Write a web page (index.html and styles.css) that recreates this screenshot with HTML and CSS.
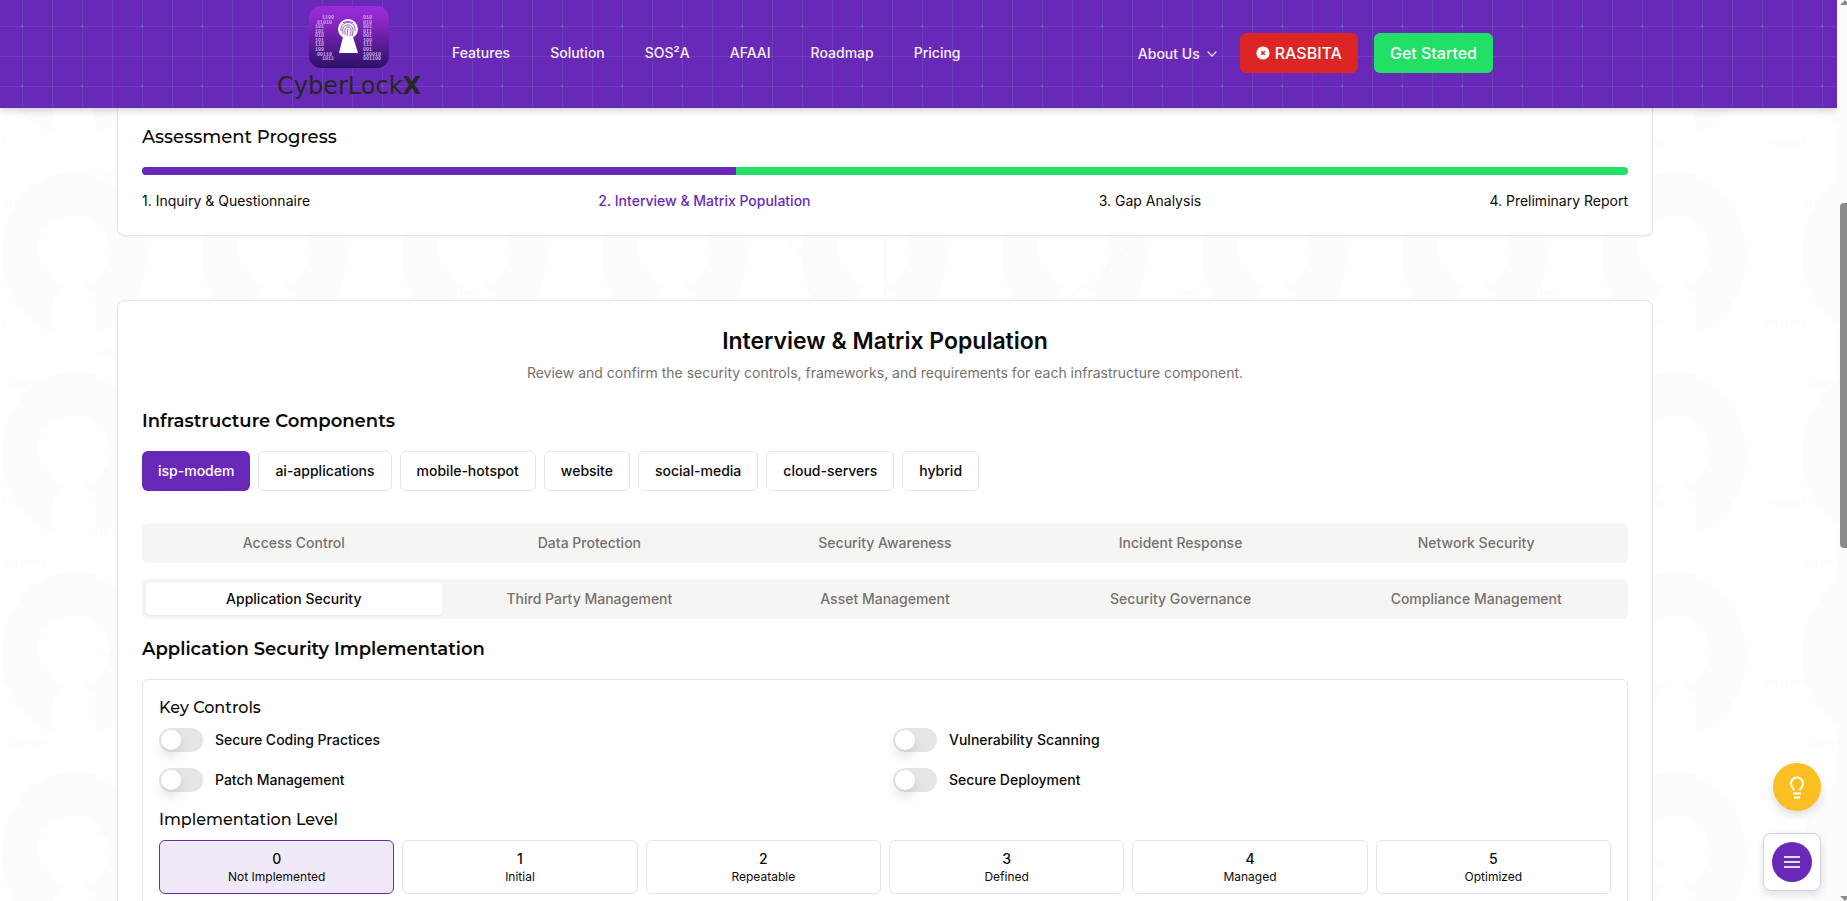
FILE: index.html
```html
<!DOCTYPE html>
<html lang="en">
<head>
<meta charset="utf-8">
<title>CyberLockX – Interview &amp; Matrix Population</title>
<link rel="stylesheet" href="styles.css">
</head>
<body>
<div class="viewport">
  <svg class="backdrop" aria-hidden="true">
    <defs>
      <pattern id="keyholes" width="200" height="200" patternUnits="userSpaceOnUse" x="-26" y="-28">
        <ellipse cx="100" cy="83" rx="73" ry="83" fill="#fcfcfe"/>
        <circle cx="100" cy="79" r="36" fill="#fff"/>
        <path d="M79 200V133a21 21 0 0 1 42 0V200z" fill="#fff"/>
      </pattern>
      <pattern id="bits" width="360" height="180" patternUnits="userSpaceOnUse" x="-37" y="130">
        <g class="bits">
          <text x="0" y="16">10101011</text><text x="40" y="76">11100101</text>
          <text x="130" y="46">0101100</text><text x="220" y="16">01011010</text><text x="130" y="166">1100</text>
        </g>
      </pattern>
    </defs>
    <rect width="100%" height="100%" fill="url(#keyholes)"/>
    <rect width="100%" height="100%" fill="url(#bits)"/>
    <path d="M783 236L847 300M885 236V300M1143 236L1067 300" stroke="#f8f8fb" fill="none"/>
  </svg>

  <header class="header">
    <div class="header-inner">
      <a class="brand" href="#">
        <svg class="brand-mark" viewBox="0 0 80 62" aria-hidden="true">
          <defs><linearGradient id="tile" x1="0" y1="0" x2="0" y2="1">
            <stop offset="0" stop-color="#9b2ad8"/><stop offset=".2" stop-color="#8f28cb"/><stop offset="1" stop-color="#2c1166"/>
          </linearGradient></defs>
          <rect width="80" height="62" rx="12" fill="url(#tile)"/>
          <g class="mark-bits">
            <text x="13" y="13">1100</text><text x="8" y="18">01010</text><text x="6" y="22">101</text><text x="6" y="27">101</text><text x="6" y="31">010</text><text x="6" y="36">101</text><text x="6" y="40">110</text><text x="6" y="45">100</text><text x="8" y="50">00110</text><text x="13" y="54">1011</text>
            <text x="54" y="13">010</text><text x="54" y="18">010</text><text x="54" y="22">001</text><text x="54" y="27">011</text><text x="54" y="31">001</text><text x="54" y="36">100</text><text x="54" y="40">111</text><text x="54" y="45">001</text><text x="54" y="50">100010</text><text x="54" y="54">001100</text>
          </g>
          <path d="M34 31h10l5 16H30z" fill="#fff"/>
          <circle cx="39" cy="23" r="10" fill="#fff"/>
          <g fill="none" stroke="#7a2bb0" stroke-width=".8">
            <path d="M32 25a7 7 0 0 1 14-3v3M34 28c-1-7 1-9 5-9s5 3 5 7l-1 4M36 29c0-3-1-8 3-8s3 5 2 9M38 30c1-3 0-5 1-7"/>
            <path d="M34 17c3-2 7-2 10 0"/>
          </g>
        </svg>
        <span class="brand-name">CyberLock<b>X</b></span>
      </a>
      <nav class="nav">
        <a href="#">Features</a><a href="#">Solution</a><a href="#">SOS²A</a><a href="#">AFAAI</a><a href="#">Roadmap</a><a href="#">Pricing</a>
      </nav>
      <div class="actions">
        <button class="about" type="button">About Us
          <svg width="12" height="12" viewBox="0 0 12 12" fill="none" stroke="currentColor" stroke-width="1.2" stroke-linecap="round" stroke-linejoin="round" aria-hidden="true"><path d="M2 4l4 4 4-4"/></svg>
        </button>
        <button class="btn btn-red" type="button">
          <svg width="14" height="14" viewBox="0 0 14 14" aria-hidden="true"><circle cx="7" cy="7" r="6.6" fill="#fff"/><path d="M5.200 5.200l3.600 3.600M8.800 5.200L5.200 8.800" stroke="#dc2626" stroke-width="1.600"/></svg>
          RASBITA</button>
        <button class="btn btn-green" type="button">Get Started</button>
      </div>
    </div>
  </header>

  <main class="main">
    <section class="card progress-card">
      <h2 class="title-light">Assessment Progress</h2>
      <div class="bar" role="progressbar" aria-label="Assessment Progress" aria-valuenow="40" aria-valuemin="0" aria-valuemax="100"><div class="bar-fill" style="width:40%"></div></div>
      <div class="steps"><span>1. Inquiry &amp; Questionnaire</span><span class="current">2. Interview &amp; Matrix Population</span><span>3. Gap Analysis</span><span>4. Preliminary Report</span></div>
    </section>

    <section class="card matrix-card">
      <div class="intro">
        <h1>Interview &amp; Matrix Population</h1>
        <p>Review and confirm the security controls, frameworks, and requirements for each infrastructure component.</p>
      </div>
      <h2 class="title">Infrastructure Components</h2>
      <div class="chips">
        <button class="chip selected" type="button">isp-modem</button><button class="chip" type="button">ai-applications</button><button class="chip" type="button">mobile-hotspot</button><button class="chip" type="button">website</button><button class="chip" type="button">social-media</button><button class="chip" type="button">cloud-servers</button><button class="chip" type="button">hybrid</button>
      </div>
      <div class="tabs" role="tablist">
        <button class="tab" role="tab">Access Control</button><button class="tab" role="tab">Data Protection</button><button class="tab" role="tab">Security Awareness</button><button class="tab" role="tab">Incident Response</button><button class="tab" role="tab">Network Security</button>
      </div>
      <div class="tabs" role="tablist">
        <button class="tab active" role="tab" aria-selected="true">Application Security</button><button class="tab" role="tab">Third Party Management</button><button class="tab" role="tab">Asset Management</button><button class="tab" role="tab">Security Governance</button><button class="tab" role="tab">Compliance Management</button>
      </div>
      <h2 class="title">Application Security Implementation</h2>
      <div class="panel">
        <h3>Key Controls</h3>
        <div class="controls">
          <label class="control"><input class="switch" type="checkbox" role="switch">Secure Coding Practices</label>
          <label class="control"><input class="switch" type="checkbox" role="switch">Vulnerability Scanning</label>
          <label class="control"><input class="switch" type="checkbox" role="switch">Patch Management</label>
          <label class="control"><input class="switch" type="checkbox" role="switch">Secure Deployment</label>
        </div>
        <h3>Implementation Level</h3>
        <div class="levels">
          <button class="level chosen" type="button"><b>0</b><span>Not Implemented</span></button>
          <button class="level" type="button"><b>1</b><span>Initial</span></button>
          <button class="level" type="button"><b>2</b><span>Repeatable</span></button>
          <button class="level" type="button"><b>3</b><span>Defined</span></button>
          <button class="level" type="button"><b>4</b><span>Managed</span></button>
          <button class="level" type="button"><b>5</b><span>Optimized</span></button>
        </div>
      </div>
    </section>
  </main>

  <div class="floating">
    <button class="tip" type="button" aria-label="Tips">
      <svg width="24" height="24" viewBox="0 0 24 24" fill="none" stroke="#fff" stroke-width="2" aria-hidden="true"><path d="M9 15.500c0-2-3-3.200-3-7a6 6 0 0 1 12 0c0 3.800-3 5-3 7M8 18.500h8M9 22.500h6"/></svg>
    </button>
    <div class="menu-box">
      <button class="menu" type="button" aria-label="Menu">
        <svg width="16" height="14" viewBox="0 0 16 14" stroke="#e6daf5" stroke-width="2" aria-hidden="true"><path d="M0 2h16M0 7h16M0 12h16"/></svg>
      </button>
    </div>
  </div>
</div>
<div class="scroll" aria-hidden="true"><div class="thumb"></div><i class="arrow up"></i><i class="arrow down"></i></div>
</body>
</html>
```
FILE: styles.css
```css
:root { --purple: #6929b8; --green: #21e065; --line: #e5e5e5; --ink: #0c0a09; --muted: #78716c; }
* { box-sizing: border-box; }
body { margin: 0; height: 100vh; display: flex; overflow: hidden; background: #fff; color: var(--ink); font: 14px/20px Inter, "Liberation Sans", sans-serif; }
button { font: inherit; color: inherit; border: 0; background: none; padding: 0; }
a { color: inherit; text-decoration: none; }
h1, h2, h3, p { margin: 0; }
.viewport { position: relative; flex: 1; overflow: hidden; }
.backdrop { position: absolute; inset: 0; width: 100%; height: 100%; }
.bits { font: 9px "Liberation Mono", monospace; fill: #fafafb; }

.header { position: relative; z-index: 2; height: 108px; padding-right: 67px; background-color: var(--purple); color: #f5effb; box-shadow: 0 2px 8px rgba(0,0,0,.2);
  background-image: radial-gradient(circle at 1px 1px, rgba(160,130,230,.3) 1px, transparent 1px), linear-gradient(rgba(125,135,190,.2) 1px, transparent 1px), linear-gradient(90deg, rgba(125,135,190,.2) 1px, transparent 1px);
  background-size: 60px 60px, 30px 30px, 30px 30px; background-position: 21px 25px, 0 26px, 22px 0; }
.header-inner { max-width: 1280px; height: 100%; margin: 0 auto; padding: 0 32px 3px; display: flex; align-items: center; }
.brand { width: 144px; display: flex; flex-direction: column; align-items: center; gap: 4px; color: #262626; }
.brand-mark { width: 80px; height: 62px; }
.mark-bits { font: bold 5px "Liberation Mono", monospace; fill: #c9a5e3; }
.brand-name { font: 24px/28px "DejaVu Sans", sans-serif; }
.nav { display: flex; gap: 40px; margin-left: 31px; font-weight: 500; }
.actions { display: flex; align-items: center; gap: 16px; margin-left: auto; }
.about { display: flex; align-items: center; gap: 6px; font-weight: 500; margin-right: 6px; padding-top: 2px; }
.btn { height: 40px; padding: 0 16px; border-radius: 6px; display: flex; align-items: center; gap: 5px; font-size: 16px; font-weight: 500; color: #fff; }
.btn-red { background: #dc2626; }
.btn-green { background: var(--green); }

.main { position: relative; max-width: 1603px; margin: 0 auto; padding-right: 67px; display: flex; flex-direction: column; gap: 64px; }
.card { border: 1px solid var(--line); border-radius: 8px; background: #fff; box-shadow: 0 1px 2px rgba(0,0,0,.06); padding: 24px; }
.title-light, .title { font-family: Montserrat, Inter, sans-serif; font-size: 18px; line-height: 28px; font-weight: 500; }
.title { font-weight: 600; }
.progress-card { border-top: 0; border-radius: 0 0 8px 8px; padding-top: 15px; }
.bar { height: 8px; margin: 16px 0; border-radius: 4px; background: var(--green); overflow: hidden; }
.bar-fill { height: 100%; background: var(--purple); }
.steps { display: flex; justify-content: space-between; }
.current { color: var(--purple); font-weight: 500; }

.intro { text-align: center; margin-bottom: 24px; }
.intro h1 { font-size: 23px; line-height: 32px; font-weight: 600; }
.intro p { color: var(--muted); margin-top: 6px; }
.chips { display: flex; flex-wrap: wrap; gap: 8px; margin: 16px 0 32px; }
.chip { height: 40px; padding: 0 16px; border: 1px solid var(--line); border-radius: 6px; background: #fff; font-weight: 500; }
.chip.selected { background: var(--purple); color: #fff; border: 0; }
.tabs { display: grid; grid-template-columns: repeat(5, 1fr); height: 40px; padding: 4px; margin-bottom: 16px; border-radius: 6px; background: #f5f5f4; }
.tab { font-weight: 500; color: var(--muted); border-radius: 4px; }
.tab.active { background: #fff; color: var(--ink); box-shadow: 0 1px 2px rgba(0,0,0,.06); }
.panel { margin-top: 16px; padding: 16px; border: 1px solid var(--line); border-radius: 6px; }
.panel h3 { font-family: Montserrat, Inter, sans-serif; font-size: 16px; line-height: 24px; font-weight: 500; margin-bottom: 8px; }
.controls { display: grid; grid-template-columns: 1fr 1fr; gap: 16px; margin-bottom: 16px; }
.control { display: flex; align-items: center; gap: 12px; font-weight: 500; }
.switch { appearance: none; width: 44px; height: 24px; margin: 0; padding: 2px; border-radius: 12px; background: #e5e5e4; }
.switch::before { content: ""; display: block; width: 20px; height: 20px; border-radius: 50%; background: #fff; box-shadow: 0 8px 12px rgba(0,0,0,.1); }
.levels { display: grid; grid-template-columns: repeat(6, 1fr); gap: 8px; }
.level { border: 1px solid var(--line); border-radius: 6px; padding: 8px; display: flex; flex-direction: column; align-items: center; }
.level b { font-weight: 500; }
.level span { font-size: 12px; line-height: 16px; }
.level.chosen { border-color: var(--purple); background: #f0e9f8; }

.floating { position: absolute; z-index: 3; right: 16px; bottom: 10px; display: flex; flex-direction: column; align-items: flex-end; gap: 22px; }
.tip { width: 48px; height: 48px; border-radius: 50%; background: #fbbf24; display: grid; place-items: center; box-shadow: 0 4px 10px rgba(0,0,0,.14); }
.menu-box { width: 58px; height: 58px; border: 1px solid #d1d0dc; border-radius: 8px; background: #fff; display: grid; place-items: center; box-shadow: 0 4px 10px rgba(0,0,0,.12); }
.menu { width: 40px; height: 40px; border-radius: 50%; background: var(--purple); display: grid; place-items: center; }
.scroll { position: relative; overflow: hidden; width: 10px; background: #fcfcfc; padding: 203px 0 0 3px; }
.thumb { height: 345px; background: #8b8b8b; border-radius: 4px 0 0 4px; }
.arrow { position: absolute; left: 3px; border: 5px solid transparent; }
.up { top: 0; border-bottom-color: #8b8b8b; border-top: 0; }
.down { bottom: 0; border-top-color: #8b8b8b; border-bottom: 0; }
```
